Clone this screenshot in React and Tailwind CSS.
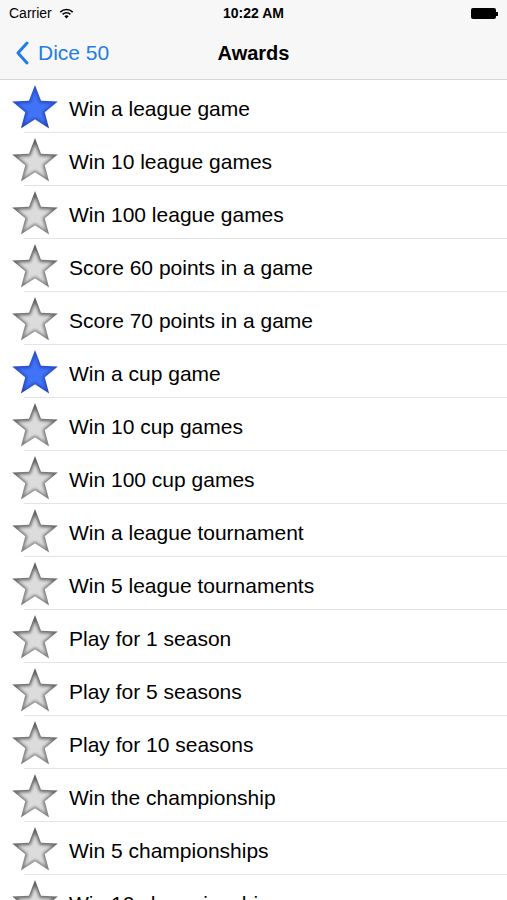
import React from "react";

const items = [
  ["Win a league game", true],
  ["Win 10 league games", false],
  ["Win 100 league games", false],
  ["Score 60 points in a game", false],
  ["Score 70 points in a game", false],
  ["Win a cup game", true],
  ["Win 10 cup games", false],
  ["Win 100 cup games", false],
  ["Win a league tournament", false],
  ["Win 5 league tournaments", false],
  ["Play for 1 season", false],
  ["Play for 5 seasons", false],
  ["Play for 10 seasons", false],
  ["Win the championship", false],
  ["Win 5 championships", false],
  ["Win 10 championships", false],
];

function starPath(cx, cy, R, r) {
  let d = "";
  for (let i = 0; i < 10; i++) {
    const rad = i % 2 === 0 ? R : r;
    const a = -Math.PI / 2 + (i * Math.PI) / 5;
    const x = cx + rad * Math.cos(a);
    const y = cy + rad * Math.sin(a);
    d += (i === 0 ? "M" : "L") + x.toFixed(2) + " " + y.toFixed(2);
  }
  return d + "Z";
}

const outer = starPath(25, 26, 24, 10.2);
const inner = starPath(25, 26.5, 18.5, 8);

function Star({ on, id }) {
  return (
    <svg width="50" height="50" viewBox="0 0 50 50" className="shrink-0 relative z-10">
      <defs>
        <filter id={"b" + id} x="-20%" y="-20%" width="140%" height="140%">
          <feGaussianBlur stdDeviation="1.7" />
        </filter>
        <linearGradient id={"g" + id} x1="0" y1="0" x2="0" y2="1">
          {on ? (
            <>
              <stop offset="0" stopColor="#2c52d4" />
              <stop offset="1" stopColor="#2846b8" />
            </>
          ) : (
            <>
              <stop offset="0" stopColor="#5e5e5e" />
              <stop offset="1" stopColor="#858585" />
            </>
          )}
        </linearGradient>
      </defs>
      <path d={outer} fill={"url(#g" + id + ")"} />
      <path
        d={inner}
        fill={on ? "#3f73f6" : "#dcdcdc"}
        filter={"url(#b" + id + ")"}
      />
    </svg>
  );
}

export default function App() {
  return (
    <div
      className="w-[507px] h-[900px] overflow-hidden bg-white text-black"
      style={{ fontFamily: "'Liberation Sans', Arial, sans-serif" }}
    >
      <div className="bg-[#f7f7f7] border-b border-[#d6d6d6] h-[80px]">
        <div className="h-[27px] flex items-center justify-between px-[9px] text-[14px] relative">
          <div className="flex items-center gap-[7px]">
            <span>Carrier</span>
            <svg width="15" height="11" viewBox="0 0 15 11">
              <path d="M7.5 10.5 L5.3 8.2 A3.2 3.2 0 0 1 9.7 8.2 Z" fill="#000" />
              <path d="M3.6 6.4 A5.6 5.6 0 0 1 11.4 6.4" stroke="#000" strokeWidth="1.6" fill="none" />
              <path d="M1.3 4.1 A8.8 8.8 0 0 1 13.7 4.1" stroke="#000" strokeWidth="1.6" fill="none" />
            </svg>
          </div>
          <span className="absolute left-1/2 -translate-x-1/2 font-bold text-[14px]">10:22 AM</span>
          <div className="flex items-center">
            <div className="w-[25px] h-[11px] bg-black rounded-[2px]" />
            <div className="w-[2px] h-[4px] bg-black" />
          </div>
        </div>
        <div className="h-[52px] flex items-center relative">
          <div className="flex items-center pl-[15px] text-[#1f7de3] text-[21px]">
            <svg width="14" height="24" viewBox="0 0 14 24" className="mr-[9px]">
              <path d="M12 2 L3 12 L12 22" stroke="#1f7de3" strokeWidth="3" fill="none" strokeLinecap="round" strokeLinejoin="round" />
            </svg>
            <span>Dice 50</span>
          </div>
          <span className="absolute left-1/2 -translate-x-1/2 font-bold text-[20px]">Awards</span>
        </div>
      </div>
      <div>
        {items.map(([t, on], i) => (
          <div key={i} className="h-[53px] pl-[24px]">
            <div className="h-full flex items-center border-b border-[#e3e3e3]">
              <div className="-ml-[14px] mt-[4px]">
                <Star on={on} id={i} />
              </div>
              <span className="ml-[9px] pt-[6px] text-[21px] whitespace-nowrap">{t}</span>
            </div>
          </div>
        ))}
      </div>
    </div>
  );
}
